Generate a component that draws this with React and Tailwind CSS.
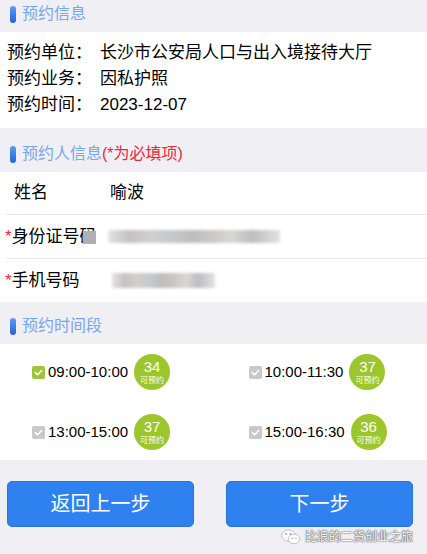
import React from "react";

const cjk = { fontFamily: '"Liberation Sans", "Noto Sans CJK SC", sans-serif' };

const SectionHeader = ({ title, extra, className = "" }) => (
  <div className={`flex items-end bg-[#efeff4] pb-[8px] pl-[10px] ${className}`}>
    <div className="flex items-center">
      <span className="mr-[6px] h-[17px] w-[6px] rounded-full bg-gradient-to-b from-[#5c9cf5] to-[#1f63d6]" />
      <span className="text-[16px] leading-[20px] text-[#78a6ee]">{title}</span>
      {extra && <span className="text-[16px] leading-[20px] text-[#f0263a]">{extra}</span>}
    </div>
  </div>
);

const Blur = ({ className }) => (
  <div
    className={`blur-[1.5px] ${className}`}
    style={{
      background:
        "linear-gradient(90deg,#e4e4e4 0%,#c4c1c1 12%,#d2d0cf 24%,#c7c9cb 36%,#bdbdbd 48%,#cac7c3 60%,#d7d7d4 72%,#bebdc0 84%,#e2e2e2 100%)",
    }}
  />
);

const Check = ({ on }) => (
  <span
    className={`flex h-[13px] w-[13px] items-center justify-center rounded-[2px] ${on ? "bg-[#9bc53b]" : "bg-[#c9c9c9]"}`}
  >
    <svg width="9" height="9" viewBox="0 0 10 10">
      <path d="M1.5 5.2 L4 7.5 L8.5 2.8" fill="none" stroke="white" strokeWidth="1.8" strokeLinecap="round" strokeLinejoin="round" />
    </svg>
  </span>
);

const Slot = ({ time, count, on }) => (
  <div className="flex items-center">
    <Check on={on} />
    <span className="ml-[3px] text-[15px] leading-[20px] text-black">{time}</span>
    <div className="ml-[6px] flex h-[36px] w-[36px] flex-col items-center justify-center rounded-full bg-[#9dc62c] text-white">
      <span className="text-[15px] leading-[16px]">{count}</span>
      <span className="mt-[1px] text-[8px] leading-[10px]">可预约</span>
    </div>
  </div>
);

const WeChatIcon = () => (
  <svg width="20" height="16" viewBox="0 0 20 16">
    <ellipse cx="7.5" cy="6.5" rx="6.8" ry="5.6" fill="white" stroke="#b5b5b5" strokeWidth="0.8" />
    <ellipse cx="13" cy="10" rx="5.8" ry="4.8" fill="white" stroke="#b5b5b5" strokeWidth="0.8" />
    <circle cx="5.2" cy="5" r="0.9" fill="#9a9a9a" />
    <circle cx="9.6" cy="5" r="0.9" fill="#9a9a9a" />
    <circle cx="11" cy="9.2" r="0.7" fill="#9a9a9a" />
    <circle cx="15" cy="9.2" r="0.7" fill="#9a9a9a" />
  </svg>
);

export default function App() {
  return (
    <div className="w-[427px] h-[554px] overflow-hidden bg-[#efeff4]" style={cjk}>
      <SectionHeader title="预约信息" className="h-[32px]" />

      {/* 预约信息 */}
      <div className="bg-white pl-[7px] pt-[8px] pb-[10px] text-[17px] leading-[26px] text-black">
        <div className="flex">
          <span className="w-[93px]">预约单位：</span>
          <span>长沙市公安局人口与出入境接待大厅</span>
        </div>
        <div className="flex">
          <span className="w-[93px]">预约业务：</span>
          <span>因私护照</span>
        </div>
        <div className="flex">
          <span className="w-[93px]">预约时间：</span>
          <span>2023-12-07</span>
        </div>
      </div>

      <SectionHeader title="预约人信息" extra="(*为必填项)" className="h-[44px]" />

      {/* 预约人信息 */}
      <div className="bg-white text-[17px] leading-[22px] text-black">
        <div className="ml-[5px] flex h-[43px] items-center border-b border-[#ececec]">
          <span className="w-[105px] pl-[9px]">姓名</span>
          <span>喻波</span>
        </div>
        <div className="ml-[5px] flex h-[44px] items-center border-b border-[#ececec]">
          <div className="relative w-[91px] overflow-hidden whitespace-nowrap">
            <span className="text-[#f0263a]">*</span>
            <span>身份证号码</span>
            <span className="absolute right-0 top-[5px] h-[13px] w-[13px] bg-[#b0afb3]" />
          </div>
          <Blur className="ml-[12px] h-[13px] w-[172px]" />
        </div>
        <div className="ml-[5px] flex h-[43px] items-center">
          <div className="w-[91px] whitespace-nowrap">
            <span className="text-[#f0263a]">*</span>
            <span>手机号码</span>
          </div>
          <Blur className="ml-[16px] h-[15px] w-[103px]" />
        </div>
      </div>

      <SectionHeader title="预约时间段" className="h-[42px]" />

      {/* 预约时间段 */}
      <div className="grid grid-cols-2 gap-y-[12px] bg-white py-[4px]">
        <div className="flex h-[48px] items-center pl-[32px]">
          <Slot time="09:00-10:00" count="34" on />
        </div>
        <div className="flex h-[48px] items-center pl-[35px]">
          <Slot time="10:00-11:30" count="37" />
        </div>
        <div className="flex h-[48px] items-center pl-[32px]">
          <Slot time="13:00-15:00" count="37" />
        </div>
        <div className="flex h-[48px] items-center pl-[35px]">
          <Slot time="15:00-16:30" count="36" />
        </div>
      </div>

      {/* 按钮 */}
      <div className="flex justify-between px-[7px] pt-[21px]">
        <button className="h-[46px] w-[187px] rounded-[5px] border border-[#2a74dc] bg-[#2e81ef] text-[20px] text-white">
          返回上一步
        </button>
        <button className="mr-[7px] h-[46px] w-[187px] rounded-[5px] border border-[#2a74dc] bg-[#2e81ef] text-[20px] text-white">
          下一步
        </button>
      </div>

      <div className="mt-[2px] flex items-center justify-end pr-[14px]">
        <WeChatIcon />
        <span
          className="ml-[4px] text-[12px] leading-[16px] text-white"
          style={{ textShadow: "0 0 1px #555, 0 0 1px #555, 0 0 2px #777" }}
        >
          比浪的二货创业之旅
        </span>
      </div>
    </div>
  );
}
